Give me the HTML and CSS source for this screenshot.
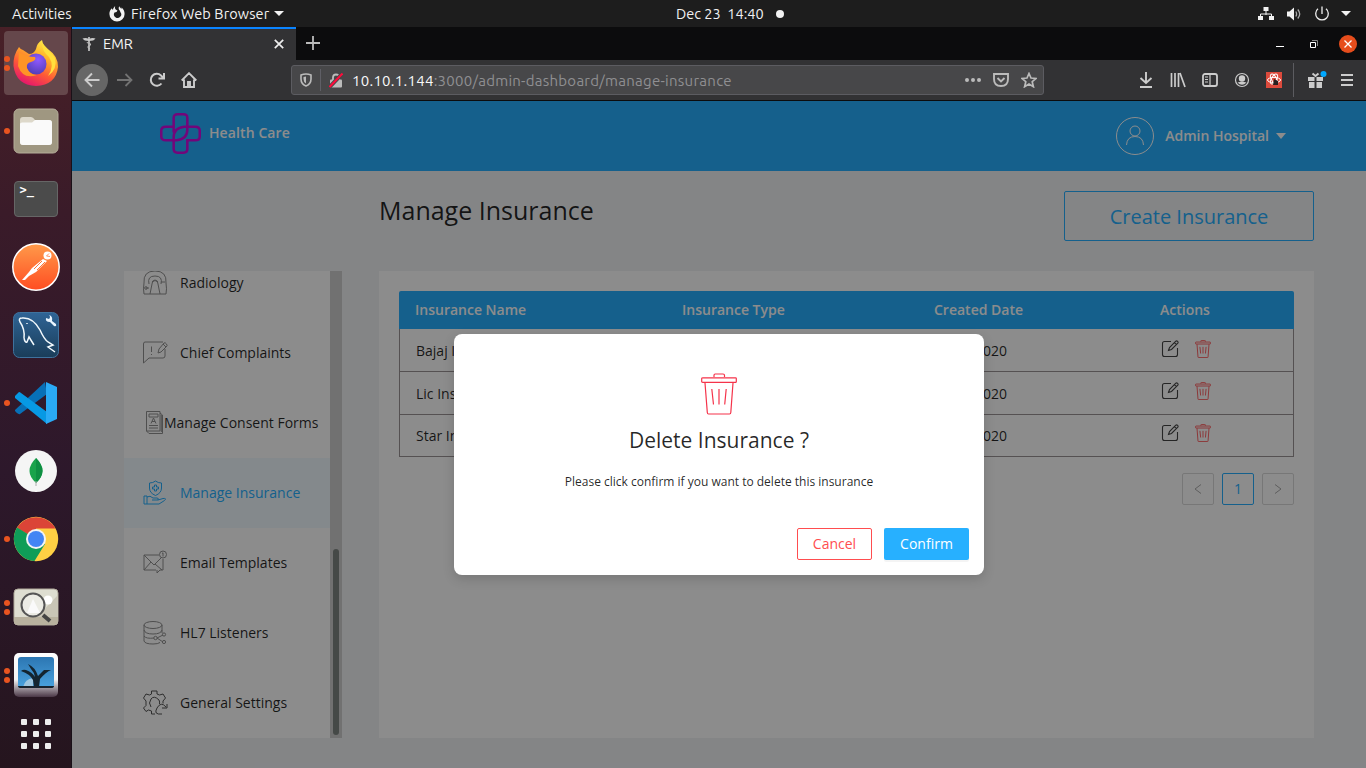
FILE: index.html
```html
<!DOCTYPE html>
<html lang="en">
<head>
<meta charset="utf-8">
<title>EMR</title>
<link rel="stylesheet" href="styles.css">
</head>
<body>
<svg width="0" height="0" class="defs">
  <defs>
    <linearGradient id="ffTail" x1="0.8" y1="0" x2="0.3" y2="1"><stop offset="0" stop-color="#fff44f"/><stop offset=".35" stop-color="#ffb02a"/><stop offset=".65" stop-color="#ff5a36"/><stop offset="1" stop-color="#e3136f"/></linearGradient>
    <radialGradient id="ffGlobe" cx=".6" cy=".3" r=".8"><stop offset="0" stop-color="#9059ff"/><stop offset="1" stop-color="#4a3bb0"/></radialGradient>
    <linearGradient id="postman" x1="0" y1="0" x2="0" y2="1"><stop offset="0" stop-color="#ff9a4a"/><stop offset="1" stop-color="#ff4d22"/></linearGradient>
    <linearGradient id="mysql" x1="0" y1="0" x2="0" y2="1"><stop offset="0" stop-color="#2f6496"/><stop offset="1" stop-color="#1a3d59"/></linearGradient>
    <linearGradient id="photo" x1="0" y1="0" x2="0" y2="1"><stop offset="0" stop-color="#fff"/><stop offset=".6" stop-color="#f4f4f4"/><stop offset="1" stop-color="#4a3746"/></linearGradient>
    <linearGradient id="sky" x1="0" y1="0" x2="0" y2="1"><stop offset="0" stop-color="#2c76b2"/><stop offset="1" stop-color="#4aa3df"/></linearGradient>
    <symbol id="trash" viewBox="0 0 36 42"><path d="M13 4V2.2Q13 1 14.200 1H22Q23.500 1 23.500 2.200V4M2 4.800H34.500Q35.300 4.800 35.300 5.600V8.500Q35.300 9.400 34.500 9.400H1.700Q.7 9.400 .7 8.500V5.600Q.7 4.800 2 4.800ZM4 10L6.300 39.500Q6.400 41 7.500 41H28.500Q29.700 41 29.800 39.500L32 10M10.800 16L12.500 31.500M18 16V31.500M25.200 16L23.700 31.500"/></symbol>
    <symbol id="edit" viewBox="0 0 18 18"><path d="M10 1.500H3.500Q1.500 1.500 1.500 3.500V14.500Q1.500 16.500 3.500 16.500H14.500Q16.500 16.500 16.500 14.500V8M7.500 10.500L8.500 7.500 14.800 1.200Q15.700.5 16.600 1.400T16.800 3.200L10.500 9.500ZM13.400 2.600L15.400 4.600"/></symbol>
  </defs>
</svg>
<div class="desktop">
  <header class="topbar">
    <span class="activities">Activities</span>
    <span class="app-menu">
      <svg width="16" height="16" viewBox="0 0 16 16"><path d="M6.200.3C5.600 1.800 6 3 7 3.800L8.500 4.500 7.500 6 5.500 6.500A3.600 3.600 0 1 0 11.300 6C11.300 4.800 10.300 4.300 9.800 3.200 9.500 2 9.900 1 10.300.3 10.900 1.700 12 2.200 12.500 3V1.600C14.500 3 15.600 5.300 15.600 8A7.600 7.600 0 0 1 .4 8C.4 5.800 1.300 3.800 2.800 2.300 2.900 3.200 3.400 3.700 4 3.800 4.200 2.200 5 .9 6.200.3Z" fill="#f2f2f2"/></svg>
      <span>Firefox Web Browser</span><i class="caret"></i>
    </span>
    <span class="clock">Dec 23&nbsp; 14:40</span><i class="notice"></i>
    <span class="tray">
      <svg width="16" height="14" viewBox="0 0 16 14"><path d="M8 3V8M2.500 10V7H13.500V10" fill="none" stroke="#f2f2f2"/><path d="M5.500 0h5v4h-5zM0 9h5v4H0zM11 9h5v4h-5z" fill="#f2f2f2"/></svg>
      <svg width="16" height="14" viewBox="0 0 16 14"><path d="M1 4.500H3.500L8 .5V13.500L3.500 9.500H1Z" fill="#f2f2f2"/><path d="M9.800 4.500Q11.400 7 9.800 9.500M11.800 2.500Q15.600 7 11.800 11.500" fill="none" stroke="#aaa" stroke-width="1.300"/></svg>
      <svg width="16" height="16" viewBox="0 0 16 16"><path d="M4 2.800A6.300 6.300 0 1 0 12 2.800M8 .5V8" fill="none" stroke="#eee" stroke-width="1.300"/></svg>
      <i class="caret"></i>
    </span>
  </header>
  <div class="workspace">
    <nav class="dock">
      <div class="dock-item current"><i class="dots two"></i><svg width="48" height="48" viewBox="0 0 48 48"><path d="M7 8Q9 11 11 11L17 15Q22 15 24 10 25 4 30 1 31 7 37 11 46 17 46 28 44 46 24 47 4 46 1.500 27 1 16 7 8Z" fill="url(#ffTail)"/><circle cx="24" cy="25" r="10.500" fill="url(#ffGlobe)"/><path d="M7 13Q15 18 23 18 25 21 19 23 14 24 15 29 18 36 25 36 11 41 6 27Z" fill="#ff9426"/><path d="M30 4Q30 12 37 18 43 27 36 37 46 30 43 19 39 13 30 4Z" fill="#ffdf3d"/></svg></div>
      <div class="dock-item"><i class="dots"></i><svg width="46" height="46" viewBox="0 0 46 46"><rect x="1" y="1" width="44" height="44" rx="5" fill="#9f9781" stroke="#b4ad99"/><path d="M7 12Q7 9 10 9H18Q20 9 22 12H36Q39 12 39 15V34Q39 37 36 37H10Q7 37 7 34Z" fill="#ddd8ca"/><path d="M7 16Q7 14.500 9 14.500H19L22 12H36Q39 12 39 15V34Q39 37 36 37H10Q7 37 7 34Z" fill="#fafafa"/></svg></div>
      <div class="dock-item"><div class="terminal">&gt;_</div></div>
      <div class="dock-item"><svg width="48" height="48" viewBox="0 0 48 48"><circle cx="24" cy="24" r="23.200" fill="url(#postman)" stroke="#fff" stroke-width="1.500"/><circle cx="35.500" cy="12.500" r="4" fill="#fff"/><path d="M31 16L35 18 24 29 17 33 13 37 10 37 17 29 20 25Z" fill="#fff"/><path d="M30 18L22 26M33 19L25 27" stroke="#ff793d" stroke-width="1"/><path d="M37 10.500L34.500 13L38 13.500" stroke="#ff793d" stroke-width=".8" fill="none"/></svg></div>
      <div class="dock-item"><svg width="48" height="48" viewBox="0 0 48 48"><rect x="1.500" y="1.500" width="45" height="45" rx="6" fill="url(#mysql)" stroke="#3f729d"/><path d="M12 27Q13 18 8 11 6 7 10 7 21 6 28 19 32 28 36 31L41 34 36 36 43 41M12 27Q13 32 15 31L17 26 22 34M15 12V13" fill="none" stroke="#f1f8fc" stroke-width="1.500"/><path d="M37 4Q39 6 37 8L34 7Q33 11 38 11L42 15Q45 16 44 13L40 10Q41 5 37 4Z" fill="#eaf5ff"/></svg></div>
      <div class="dock-item"><i class="dots"></i><svg width="44" height="44" viewBox="0 0 44 44"><path d="M1 29L31 1 33 13 6 33Q4 34 1 30Z" fill="#0870b7"/><path d="M1 15L5 11Q6 11 7 12L33 31V43L1 17Z" fill="#0799e4"/><path d="M32 1L43 6V38L32 43Z" fill="#2aaaf5"/></svg></div>
      <div class="dock-item"><svg width="44" height="44" viewBox="0 0 44 44"><circle cx="22" cy="22" r="21" fill="#f5f5f5"/><path d="M22 9Q35 22 22 34Q9 22 22 9Z" fill="#19a34b"/><path d="M22 9Q35 22 22 34Z" fill="#0e8f42"/><path d="M22 32V37" stroke="#aaa"/></svg></div>
      <div class="dock-item"><i class="dots"></i><svg width="46" height="46" viewBox="0 0 46 46"><circle cx="23" cy="23" r="22.200" fill="#ffd044"/><path d="M23 23L4 12A22.200 22.200 0 0 1 42.400 12.500H23Z" fill="#db4437"/><path d="M23 23L4 11.500A22.200 22.200 0 0 0 21.500 45L32 28Z" fill="#0f9d58"/><circle cx="23" cy="23" r="10" fill="#f4f4f4"/><circle cx="23" cy="23" r="8" fill="#4285f4"/></svg></div>
      <div class="dock-item"><i class="dots two"></i><svg width="46" height="40" viewBox="0 0 46 40"><rect x="1" y="2" width="44" height="36" rx="4" fill="#deded1" stroke="#b0aa9b"/><path d="M1 30H45V34Q45 38 41 38H5Q1 38 1 34Z" fill="#b8b19e"/><path d="M24 30L45 8V30Z" fill="#c9c5b6"/><circle cx="35" cy="13" r="4.500" fill="#fff"/><circle cx="20" cy="18" r="11.500" fill="#ecece5" stroke="#555" stroke-width="2"/><path d="M14 26L20 12 27 26Z" fill="#fafafa"/><path d="M30 28L37 34" stroke="#444" stroke-width="4"/></svg></div>
      <div class="dock-item"><i class="dots two"></i><svg width="46" height="46" viewBox="0 0 46 46"><rect x="1" y="1" width="44" height="44" rx="5" fill="url(#photo)"/><rect x="5" y="5" width="36" height="31" rx="3" fill="url(#sky)"/><path d="M10 35Q12 27 20 26V35Z" fill="#9fc6df"/><path d="M8 19Q10 17 13 18 19 20 22 25 21 20 18 17L15 12Q22 15 25 24 29 20 31 18L38 18Q33 20 27 27L26 35H21L20 28Q17 22 8 19Z" fill="#142530"/><path d="M5 34H41Q41 36 38 36H8Q5 36 5 34Z" fill="#18232e"/></svg></div>
      <div class="apps-grid"><i></i><i></i><i></i><i></i><i></i><i></i><i></i><i></i><i></i></div>
    </nav>
    <main class="window">
      <div class="tabs">
        <div class="tab">
          <svg width="14" height="16" viewBox="0 0 14 16"><path d="M.5 2.500Q4 1.500 7 3 10 1.500 13.500 2.500 12 5 7 5 2 5 .5 2.500Z" fill="#c8c8c8"/><path d="M7 1V15" stroke="#ccc" stroke-width="1.600"/><path d="M4.800 6.500Q11 8 7 10 4.500 11 8 13" fill="none" stroke="#bbb" stroke-width="1.100"/></svg>
          <span>EMR</span>
          <svg class="tab-close" width="10" height="10" viewBox="0 0 10 10"><path d="M.8.8L9.200 9.200M9.200.8L.8 9.200" stroke="#eee" stroke-width="1.700"/></svg>
        </div>
        <svg class="plus" width="14" height="14" viewBox="0 0 14 14"><path d="M7 0V14M0 7H14" stroke="#bbb" stroke-width="1.800"/></svg>
        <div class="controls"><i class="minimize"></i><svg width="8" height="8" viewBox="0 0 8 8"><path d="M.5 2.500H5.500V7.500H.5Z" fill="none" stroke="#fff"/><path d="M2 .5H7.500V6" fill="none" stroke="#888"/></svg><i class="close"><svg width="8" height="8" viewBox="0 0 8 8"><path d="M.5.5L7.500 7.500M7.500.5L.5 7.500" stroke="#fff" stroke-width="1.300"/></svg></i></div>
      </div>
      <div class="toolbar">
        <div class="nav-icons">
          <i class="back"><svg width="16" height="16" viewBox="0 0 16 16"><path d="M15.500 8H1.500M8 1.500L1.500 8 8 14.500" fill="none" stroke="#ccc" stroke-width="1.900"/></svg></i>
          <svg width="16" height="16" viewBox="0 0 16 16"><path d="M0 8H14.500M8.500 2L14.500 8 8.500 14" fill="none" stroke="#737373" stroke-width="1.800"/></svg>
          <svg width="16" height="16" viewBox="0 0 16 16"><path d="M12.500 11.500A6 6 0 1 1 12 3.500L14.500 6M15 1V6.500H9.500" fill="none" stroke="#ccc" stroke-width="2"/></svg>
          <svg width="16" height="16" viewBox="0 0 16 16"><path d="M.7 8.500L8 1.200 15.300 8.500M3 7.500V15H13V7.500M7 15V10H9V15" fill="none" stroke="#ccc" stroke-width="1.900"/></svg>
        </div>
        <div class="address">
          <svg width="12" height="14" viewBox="0 0 12 14"><path d="M1 2Q6 0 11 2V6Q11 11 6 13 1 11 1 6Z" fill="none" stroke="#bbb" stroke-width="1.600"/><path d="M6 3.500V10.500Q3.500 9 3.500 6V4Z" fill="#bbb"/></svg>
          <i class="divider"></i>
          <svg width="14" height="15" viewBox="0 0 14 15"><path d="M4 7V4.500Q4 1.500 7 1.500T10 4.500V7" fill="none" stroke="#bbb" stroke-width="1.800"/><rect x="1" y="6.500" width="12" height="8" rx="1" fill="#bbb"/><path d="M.5 14L13.500.5" stroke="#474749" stroke-width="4"/><path d="M.5 14L13.500.5" stroke="#ff0b3b" stroke-width="2"/></svg>
          <span class="url"><b>10.10.1.144</b>:3000/admin-dashboard/manage-insurance</span>
          <svg width="16" height="4" viewBox="0 0 16 4"><path d="M0 2a2 2 0 1 1 4 0a2 2 0 1 1-4 0M6 2a2 2 0 1 1 4 0a2 2 0 1 1-4 0M12 2a2 2 0 1 1 4 0a2 2 0 1 1-4 0" fill="#bbb"/></svg>
          <svg width="16" height="14" viewBox="0 0 16 14"><path d="M1 1H15V6Q15 13 8 13 1 13 1 6ZM4.500 5L8 8.500 11.500 5" fill="none" stroke="#bbb" stroke-width="1.900"/></svg>
          <svg width="16" height="16" viewBox="0 0 16 16"><path d="M8 1.500L10 6 15 6.400 11.200 9.700 12.400 14.700 8 12 3.600 14.700 4.800 9.700 1 6.400 6 6Z" fill="none" stroke="#bbb" stroke-width="1.700"/></svg>
        </div>
        <div class="tools">
          <svg width="16" height="16" viewBox="0 0 16 16"><path d="M8 0V11M2.500 6L8 11 13.500 6M2 15H14" fill="none" stroke="#ccc" stroke-width="1.900"/></svg>
          <svg width="16" height="16" viewBox="0 0 16 16"><path d="M1.500 1V15M5 1V15M8.500 1V15M10 1L15 15" fill="none" stroke="#ccc" stroke-width="1.700"/></svg>
          <svg width="16" height="16" viewBox="0 0 16 16"><rect x="1" y="2" width="14" height="12" rx="2" fill="none" stroke="#ccc" stroke-width="1.800"/><path d="M8 2V14M3 5H6M3 7.500H6M3 10H6" stroke="#ccc" stroke-width="1.200"/></svg>
          <svg width="16" height="16" viewBox="0 0 16 16"><circle cx="8" cy="8" r="6.500" fill="none" stroke="#ccc" stroke-width="1.200"/><circle cx="8" cy="6.500" r="3.200" fill="#ccc"/><path d="M3.500 10.500Q8 9 12.500 10.500 8 15 3.500 10.500Z" fill="#ccc"/></svg>
          <svg width="16" height="16" viewBox="0 0 16 16"><path d="M0 0H16V16H0Z" fill="#dc4a3c"/><ellipse cx="8" cy="8" rx="6.500" ry="2.600" fill="none" stroke="#fff"/><ellipse cx="8" cy="7" rx="2.500" ry="5.500" transform="rotate(30 8 7)" fill="none" stroke="#fff"/><ellipse cx="8" cy="7" rx="2.500" ry="5.500" transform="rotate(-30 8 7)" fill="none" stroke="#fff"/><path d="M8 7L12 9 12 13 7 13Z" fill="#2b2020"/></svg>
          <i class="tool-divider"></i>
          <svg width="19" height="18" viewBox="0 0 19 18"><path d="M0 6H6.500V10H0ZM8.500 6H15V10H8.500ZM1 11H6.500V17H1ZM8.500 11H14V17H8.500Z" fill="#ccc"/><path d="M4.500 2.500L7.500 5 10.500 2.500" fill="none" stroke="#ccc" stroke-width="2"/><circle cx="15.500" cy="3" r="3" fill="#00a8ff"/></svg>
          <svg width="12" height="14" viewBox="0 0 12 14"><path d="M0 2H12M0 7H12M0 12H12" stroke="#ccc" stroke-width="2"/></svg>
        </div>
      </div>
      <div class="page">
        <header class="site-header">
          <div class="brand"><svg width="41" height="41" viewBox="0 0 42 42"><path d="M14 20V5Q14 1.300 18 1.300H24Q28 1.300 28 5V14H36Q40.700 14 40.700 18V24Q40.700 28 36 28H28V37Q28 40.700 24 40.700H18Q14 40.700 14 37V25Q14 15 25 14H28M28 14V17Q28 27 17 28H6Q1.300 28 1.300 24V18Q1.300 14 6 14H14" fill="none" stroke="#d00bdf" stroke-width="2.600"/></svg><span>Health Care</span></div>
          <div class="user"><i class="avatar"><svg width="20" height="22" viewBox="0 0 20 22"><circle cx="10" cy="6" r="5" fill="none" stroke="#fff"/><path d="M1.500 20Q2 11.500 10 11.500T18.500 20" fill="none" stroke="#fff"/></svg></i><span>Admin Hospital</span><i class="caret"></i></div>
        </header>
        <div class="content">
          <aside class="sidebar">
            <div class="menu">
              <a class="menu-item"><svg width="26" height="26" viewBox="0 0 26 26"><path d="M2 13Q1 1 13 1T24 13Q25 19 24 24H2Q1 19 2 13M7 14Q5 6 13 6T19 14M8 24L10 14Q10 10 13 10T16 14L18 24M4 18H7M19 12H23M10 12Q13 9 16 12"/><circle cx="4" cy="18" r="1.300"/></svg><span>Radiology</span></a>
              <a class="menu-item"><svg width="26" height="26" viewBox="0 0 26 26"><path d="M21 2H3Q1.500 2 1.500 4V23L7 18H21Q23 18 23 16V9M9.500 6.500V12M9.500 14V15M16 13L17 9 22 3Q23 2 24.500 4T24 7L19 12ZM21 4L24 7"/></svg><span>Chief Complaints</span></a>
              <a class="menu-item snug"><svg width="20" height="26" viewBox="0 0 20 26"><path d="M2.500 1.500H16V21H2.500ZM16 3L18.500 5V23.500H5L2.500 21M5 4H14V7H5ZM7 13.500L9.500 8 12 13.500M8 11.500H11M5 15.500H14M5 18H14M17.300 5V22"/></svg><span>Manage Consent Forms</span></a>
              <a class="menu-item active"><svg width="26" height="26" viewBox="0 0 26 26"><path d="M13.500 1Q16 3 19.500 3V8Q19.500 13 13.500 15.500 7.500 13 7.500 8V3Q11 3 13.500 1ZM12.500 5H14.500V7H16.500V9H14.500V11H12.500V9H10.500V7H12.500ZM2 16H5V24H2ZM5 17Q8 15 11 18H15Q17 18 16 20H10M16 20L21 18.500Q25 18 22.500 20.500L17 24H5"/></svg><span>Manage Insurance</span></a>
              <a class="menu-item"><svg width="26" height="26" viewBox="0 0 26 26"><path d="M17 5H2V20H14M2 5L12 15 19 8M2 20L9 12M13 14L20 20M21 9V20H18L15 23V20"/><circle cx="21" cy="4.500" r="3.500"/><path d="M20 3.500L21 2.800V6.500"/></svg><span>Email Templates</span></a>
              <a class="menu-item"><svg width="26" height="26" viewBox="0 0 26 26"><ellipse cx="11" cy="5" rx="9" ry="3.500"/><path d="M2 5V21Q3 24 11 24 16 24 18 22.500M2 10Q3 14 11 14T20 10V5M2 16Q4 19 12 18M20 10V13M15 18L21 15M15 18L21 22"/><circle cx="13.500" cy="18" r="1.700"/><circle cx="22" cy="14.500" r="1.600"/><circle cx="22" cy="22" r="1.600"/></svg><span>HL7 Listeners</span></a>
              <a class="menu-item dark"><svg width="26" height="26" viewBox="0 0 26 26"><path d="M13 24H9.500V21L6.500 20 4 21.500 1.500 18 4 15.500V11L1.500 8 4 4 7.500 5 9.500 4V1H15V4L17.500 5 21 4 23.500 8 21 11V13.500M9 17Q6 13 9 9T17 10Q18 12 17.500 14M24 17Q19 11 15 18T20 24M20 18H25V14"/></svg><span>General Settings</span></a>
            </div>
            <div class="scroll"><i></i></div>
          </aside>
          <section class="main">
            <div class="heading"><h1>Manage Insurance</h1><button class="create">Create Insurance</button></div>
            <div class="card">
              <table>
                <thead><tr><th class="c1">Insurance Name</th><th class="c2">Insurance Type</th><th class="c3">Created Date</th><th class="c4">Actions</th></tr></thead>
                <tbody>
                  <tr class="first"><td>Bajaj Insurance</td><td></td><td>23-12-2020</td><td><div class="actions"><svg class="edit"><use href="#edit"/></svg><svg class="delete"><use href="#trash"/></svg></div></td></tr>
                  <tr><td>Lic Insurance</td><td></td><td>23-12-2020</td><td><div class="actions"><svg class="edit"><use href="#edit"/></svg><svg class="delete"><use href="#trash"/></svg></div></td></tr>
                  <tr class="last"><td>Star Insurance</td><td></td><td>23-12-2020</td><td><div class="actions"><svg class="edit"><use href="#edit"/></svg><svg class="delete"><use href="#trash"/></svg></div></td></tr>
                </tbody>
              </table>
              <div class="pagination"><span><svg width="8" height="10" viewBox="0 0 8 10"><path d="M7 .5L1 5 7 9.500"/></svg></span><span class="on">1</span><span><svg width="8" height="10" viewBox="0 0 8 10"><path d="M1 .5L7 5 1 9.500"/></svg></span></div>
            </div>
          </section>
        </div>
        <div class="mask">
          <div class="modal" role="dialog">
            <svg class="modal-icon"><use href="#trash"/></svg>
            <h2>Delete Insurance ?</h2>
            <p>Please click confirm if you want to delete this insurance</p>
            <div class="buttons"><button class="cancel">Cancel</button><button class="confirm">Confirm</button></div>
          </div>
        </div>
      </div>
    </main>
  </div>
</div>
</body>
</html>
```
FILE: styles.css
```css
* { box-sizing: border-box; }
body { margin: 0; font-family: "Open Sans", "Noto Sans", sans-serif; font-size: 14px; }
svg { flex: none; display: block; }
.defs { position: absolute; }
button { font-family: inherit; padding: 0 0 1px; background: none; }
.desktop { width: 1366px; height: 768px; overflow: hidden; display: flex; flex-direction: column; }
.caret { width: 0; height: 0; border: 5px solid transparent; border-top-color: currentColor; border-bottom: 0; }

.topbar { height: 27px; background: #1d1d1d; color: #f2f2f2; display: flex; align-items: center; padding-left: 12px; padding-right: 15px; font-family: Ubuntu, "Open Sans", sans-serif; font-size: 14.500px; flex: none; }
.activities { width: 97px; }
.activities, .clock { padding-bottom: 1px; }
.app-menu { display: flex; align-items: center; gap: 6px; width: 567px; white-space: nowrap; }
.app-menu span { letter-spacing: .1px; }
.app-menu .caret { margin-left: -1px; }
.clock { width: 100px; white-space: nowrap; }
.notice { width: 8px; height: 8px; border-radius: 50%; background: #f2f2f2; }
.tray { margin-left: auto; display: flex; align-items: center; gap: 12px; }
.tray svg { margin-left: 1px; margin-right: -1px; }
.tray svg:first-child { margin-right: -.5px; }

.workspace { display: flex; flex: 1; min-height: 0; }
.dock { width: 72px; padding-top: 2px; background: linear-gradient(#482027, #3a1b29 25%, #2d182b 60%, #25151e); border-right: 1px solid #1a1118; display: flex; flex-direction: column; align-items: center; }
.dock-item { width: 64px; height: 64px; margin: 2px 0; border-radius: 4px; display: flex; align-items: center; justify-content: center; position: relative; flex: none; }
.dock-item.current { background: #65474b; }
.dots { position: absolute; left: 0; top: 29px; width: 6px; height: 6px; border-radius: 50%; background: #e95420; }
.dots.two { top: 25px; box-shadow: 0 9px #e95420; }
.terminal { width: 44px; height: 36px; border-radius: 4px; background: #4b4b4b; border: 1px solid #666; color: #fff; font: bold 12px "DejaVu Sans Mono", monospace; padding: 1px 5px; }
.apps-grid { margin-top: 10px; display: grid; grid-template-columns: repeat(3, 6px); gap: 6px; }
.apps-grid i { height: 6px; background: #eee; border-radius: 1px; }

.window { flex: 1; display: flex; flex-direction: column; min-width: 0; }
.tabs { height: 33px; background: #0c0c0d; display: flex; align-items: center; flex: none; }
.tab { width: 224px; height: 33px; background: #323234; border-top: 2px solid #0a84ff; display: flex; align-items: center; padding: 0 12px 1px 10px; color: #f5f5f5; font-family: Ubuntu, "Open Sans", sans-serif; font-size: 14.500px; }
.tab span { margin-left: 7px; padding-bottom: 2px; }
.tab-close { margin-left: auto; }
.plus { margin-left: 10px; margin-top: -1px; }
.controls { margin-left: auto; display: flex; align-items: center; gap: 21px; padding-right: 9px; }
.minimize { width: 8px; height: 1px; background: #fff; margin: 5px 5px 0 0; }
.close { width: 18px; height: 18px; border-radius: 50%; background: #e64d1c; display: grid; place-items: center; }
.toolbar { height: 41px; background: #323234; border-bottom: 1px solid #0c0c0d; display: flex; align-items: center; flex: none; padding-left: 4px; }
.nav-icons { width: 215px; display: flex; align-items: center; gap: 16px; }
.back { width: 32px; height: 32px; border-radius: 50%; background: #666; display: grid; place-items: center; margin-right: -7px; }
.address { width: 753px; height: 30px; border: 1px solid #5c5c61; border-radius: 3px; background: #474749; display: flex; align-items: center; padding: 0 6px 0 8px; gap: 8px; color: #8f8f92; }
.divider { width: 1px; height: 22px; background: #5f5f66; }
.url { flex: 1; padding-left: 1px; font-family: Ubuntu, "Open Sans", sans-serif; font-size: 15px; letter-spacing: .26px; white-space: nowrap; }
.url b { color: #f9f9fa; font-weight: 400; }
.address > svg:nth-last-child(-n+2) { margin-left: 4px; }
.tools { display: flex; align-items: center; gap: 16px; margin-left: auto; padding-right: 13px; }
.tool-divider { width: 1px; height: 34px; background: #5c5c60; margin: 0 -2px 0 -5px; }
.tool-divider + svg { margin-right: -2px; }

.page { flex: 1; background: #f0f2f5; position: relative; color: rgba(0, 0, 0, .85); display: flex; flex-direction: column; min-height: 0; }
.site-header { height: 70px; flex: none; background: #27b0ff; display: flex; align-items: center; justify-content: space-between; padding: 0 80px 0 88px; color: #fff; font-weight: 600; }
.brand, .user { display: flex; align-items: center; }
.brand { gap: 8px; margin-top: -5px; }
.user { gap: 7px; }
.brand span { padding-bottom: 2px; letter-spacing: .1px; }
.user span { padding-bottom: 1px; }
.user .caret { border-top-width: 6px; }
.avatar { width: 38px; height: 38px; border: 1px solid #fff; border-radius: 50%; display: grid; place-items: center; margin-right: 4px; }
.content { display: flex; gap: 37px; padding: 0 52px 30px; flex: 1; min-height: 0; }
.sidebar { width: 218px; margin-top: 100px; display: flex; background: #fff; overflow: hidden; }
.menu { width: 206px; display: flex; flex-direction: column; justify-content: flex-end; }
.menu-item { height: 70px; flex: none; display: flex; align-items: center; padding-left: 18px; gap: 12px; white-space: nowrap; color: rgba(0, 0, 0, .85); }
.menu-item span { padding-bottom: 2px; }
.menu-item svg { fill: none; stroke: #909090; stroke-width: 1; }
.menu-item.snug { padding-left: 20px; gap: 0; }
.menu-item.active { background: #f1faff; color: #27b0ff; }
.menu-item.active svg { stroke: #27b0ff; }
.menu-item.dark svg { stroke: #555; }
.scroll { width: 12px; background: #cecece; padding: 278px 3px 3px; display: flex; }
.scroll i { width: 6px; border-radius: 3px; background: #7f8582; }
.main { flex: 1; display: flex; flex-direction: column; }
.heading { height: 100px; flex: none; display: flex; justify-content: space-between; padding-top: 20px; }
h1 { margin: -1px 0 0; font-size: 25px; font-weight: 400; line-height: 40px; }
.create { width: 250px; height: 50px; border: 1px solid #27b0ff; border-radius: 2px; color: #27b0ff; font-size: 20px; padding: 1px 0 0; }
.card { flex: 1; background: #fff; padding: 20px; }
table { width: 895px; table-layout: fixed; border-spacing: 0; }
th { height: 38px; background: #27b0ff; color: #fff; font-weight: 600; text-align: left; padding: 0 16px 2px; }
th:first-child { border-radius: 2px 0 0 0; }
th:last-child { border-radius: 0 2px 0 0; }
.c1 { width: 267px; }
.c2 { width: 252px; }
.c3 { width: 226px; }
td { height: 43px; padding: 0 16px; border-bottom: 1px solid #9b9496; }
.first td { padding-top: 1px; }
.last td { height: 42px; padding-bottom: 1px; }
td:first-child { border-left: 1px solid #9b9496; }
td:last-child { border-right: 1px solid #9b9496; }
.actions { display: flex; align-items: center; gap: 16px; padding: 0 0 4px 1px; }
.edit { width: 18px; height: 18px; fill: none; stroke: #444; stroke-width: 1.100; }
.delete { width: 16px; height: 18px; fill: none; stroke: #ff4d4f; stroke-width: 2; }
.pagination { display: flex; justify-content: flex-end; gap: 8px; padding-top: 16px; }
.pagination span { width: 32px; height: 32px; border: 1px solid #d9d9d9; border-radius: 2px; display: grid; place-items: center; }
.pagination svg { fill: none; stroke: #aaa; }
.pagination .on { color: #27b0ff; border-color: #27b0ff; padding-bottom: 1px; }

.mask { position: absolute; inset: 0; background: rgba(0, 0, 0, .45); }
.modal { width: 530px; height: 241px; margin: 233px 0 0 382px; background: #fff; border-radius: 8px; display: flex; flex-direction: column; align-items: center; padding: 39px 15px 15px; box-shadow: 0 4px 12px rgba(0, 0, 0, .15); }
.modal-icon { width: 38px; height: 42px; fill: none; stroke: #f5334a; stroke-width: 1.200; }
h2 { margin: 8px 0 0; font-size: 21px; font-weight: 400; line-height: 34px; }
.modal p { margin: 15px 0 0; font-size: 12px; line-height: 20px; }
.buttons { display: flex; gap: 12px; margin-top: auto; align-self: flex-end; }
.buttons button { height: 32px; border-radius: 2px; font-size: 14px; }
.cancel { width: 75px; border: 1px solid #ff4d4f; color: #ff4d4f; }
.confirm { width: 85px; border: 0; background: #27b0ff; color: #fff; box-shadow: 0 2px 0 rgba(0, 0, 0, .045); }
```
